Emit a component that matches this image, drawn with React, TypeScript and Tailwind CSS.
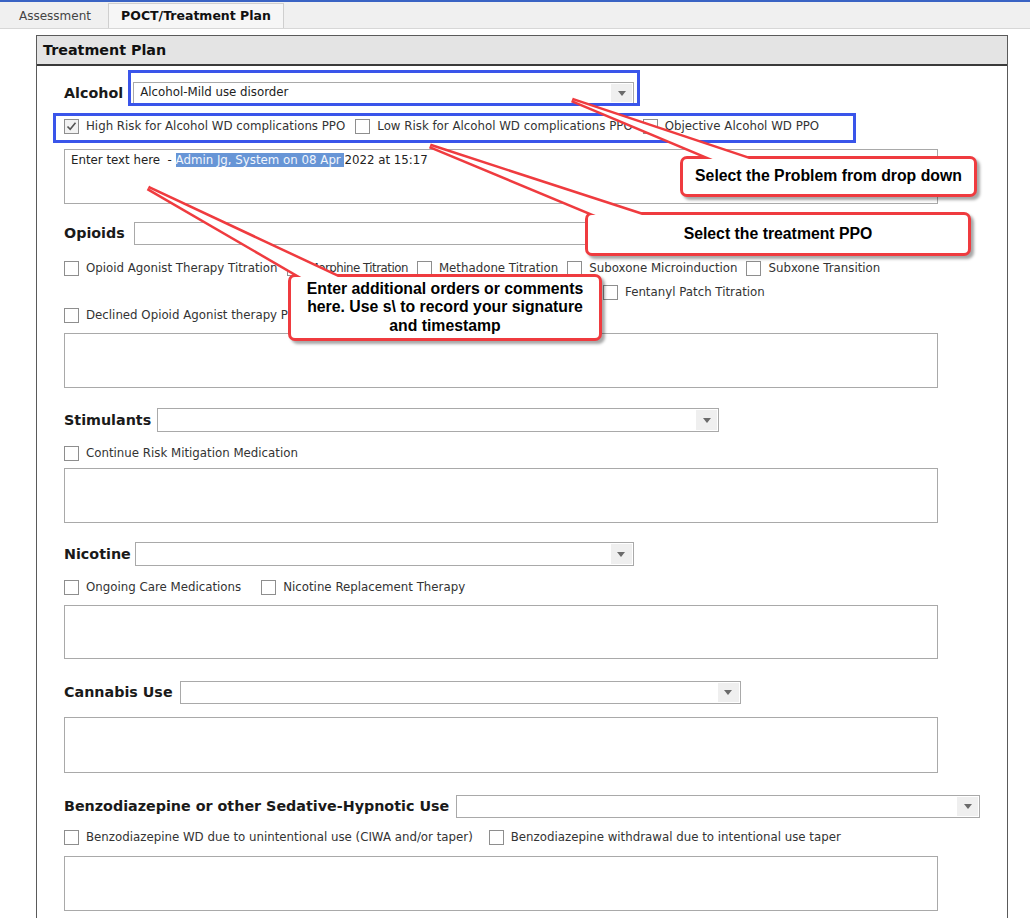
import React from "react";

type CheckProps = { label: string; checked?: boolean; textClass?: string };

function Check({ label, checked, textClass = "" }: CheckProps) {
  return (
    <div className="flex items-center gap-[7px] whitespace-nowrap">
      <span
        className={`w-[15px] h-[15px] shrink-0 border border-[#8e8e8e] flex items-center justify-center ${
          checked ? "bg-[#f2f2f2]" : "bg-white"
        }`}
      >
        {checked && (
          <svg width="11" height="11" viewBox="0 0 11 11">
            <path d="M1.5 5.5 L4.2 8.3 L9.5 1.8" fill="none" stroke="#555" strokeWidth="1.6" />
          </svg>
        )}
      </span>
      <span className={`text-[#333] ${textClass}`}>{label}</span>
    </div>
  );
}

function Select({ className, value }: { className: string; value?: string }) {
  return (
    <div className={`flex items-stretch border border-[#a9a9a9] bg-white ${className}`}>
      <div className="flex-1 flex items-center px-[6px] text-[#222]">{value}</div>
      <div className="w-[21px] m-px bg-[#efefef] flex items-center justify-center">
        <svg width="8" height="5" viewBox="0 0 8 5">
          <path d="M0 0 H8 L4 5 Z" fill="#6b6b6b" />
        </svg>
      </div>
    </div>
  );
}

function Label({ children }: { children: React.ReactNode }) {
  return (
    <span className="font-bold text-[14.3px] text-[#1a1a1a] whitespace-nowrap">
      {children}
    </span>
  );
}

function TextBox({ className = "", children }: { className?: string; children?: React.ReactNode }) {
  return (
    <div className={`w-[874px] border border-[#a9a9a9] bg-white px-[6px] pt-[5px] ${className}`}>
      {children}
    </div>
  );
}

const callouts = [
  {
    box: "left-[680px] top-[156px] w-[297px] h-[41px]",
    text: "Select the Problem from drop down",
    wedge: "572,100 715,160 752,160",
  },
  {
    box: "left-[585px] top-[212px] w-[386px] h-[44px]",
    text: "Select the treatment PPO",
    wedge: "430,146 598,216 645,216",
  },
  {
    box: "left-[288px] top-[274px] w-[314px] h-[67px]",
    text: "Enter additional orders or comments here. Use s\\ to record your signature and timestamp",
    wedge: "148,188 303,278 340,278",
  },
];

export default function App() {
  return (
    <div className="relative w-[1030px] h-[918px] overflow-hidden bg-white font-['DejaVu_Sans',sans-serif] text-[11.8px] leading-none">
      {/* window top line */}
      <div className="h-[2px] bg-[#3a63c4]" />

      {/* Tabs */}
      <div className="h-[27px] bg-[#f0f0f0] border-b border-[#d7d7d7] flex items-end pl-[8px]">
        <div className="h-[24px] px-[11px] flex items-center text-[12px] text-[#444]">Assessment</div>
        <div className="h-[25px] w-[176px] ml-[6px] border border-b-0 border-[#cfcfcf] bg-[#f6f6f6] flex items-center justify-center font-bold text-[12.5px] text-[#111]">
          POCT/Treatment Plan
        </div>
      </div>

      {/* Panel */}
      <div className="pl-[36px] pt-[6px]">
        <div className="w-[972px] h-[900px] border border-[#5a5a5a] border-b-0">
          <div className="h-[30px] bg-[#e4e4e4] border-b-2 border-[#3a3a3a] flex items-center pl-[6px]">
            <span className="font-bold text-[14.3px] text-[#111]">Treatment Plan</span>
          </div>

          <div className="pl-[27px] flex flex-col">
            {/* Alcohol */}
            <div className="mt-[16px] flex items-center gap-[10px] h-[22px]">
              <Label>Alcohol</Label>
              <Select className="w-[501px] h-[22px]" value="Alcohol-Mild use disorder" />
            </div>
            <div className="mt-[15px] flex items-center gap-[10px] h-[15px]">
              <Check checked label="High Risk for Alcohol WD complications PPO" />
              <Check label="Low Risk for Alcohol WD complications PPO" />
              <Check label="Objective Alcohol WD PPO" />
            </div>
            <TextBox className="mt-[15px] h-[55px] border-[#8fa6d2]">
              <span className="text-[#222]">Enter text here&nbsp; - </span>
              <span className="bg-[#6795d6] text-[#f2f6fc]">Admin Jg, System on 08 Apr </span>
              <span className="text-[#222]">2022 at 15:17</span>
            </TextBox>

            {/* Opioids */}
            <div className="mt-[18px] flex items-center gap-[9px] h-[23px]">
              <Label>Opioids</Label>
              <Select className="w-[586px] h-[23px]" />
            </div>
            <div className="mt-[16px] flex items-center gap-[9px] h-[15px]">
              <Check label="Opioid Agonist Therapy Titration" />
              <Check label="Morphine Titration" textClass="tracking-[-0.5px]" />
              <Check label="Methadone Titration" />
              <Check label="Suboxone Microinduction" />
              <Check label="Subxone Transition" />
            </div>
            <div className="mt-[9px] flex items-center h-[15px] pl-[539px]">
              <Check label="Fentanyl Patch Titration" />
            </div>
            <div className="mt-[8px] flex items-center h-[15px]">
              <Check label="Declined Opioid Agonist therapy PPO" />
            </div>
            <TextBox className="mt-[10px] h-[55px]" />

            {/* Stimulants */}
            <div className="mt-[20px] flex items-center gap-[6px] h-[24px]">
              <Label>Stimulants</Label>
              <Select className="w-[562px] h-[24px]" />
            </div>
            <div className="mt-[14px] flex items-center h-[15px]">
              <Check label="Continue Risk Mitigation Medication" />
            </div>
            <TextBox className="mt-[7px] h-[55px]" />

            {/* Nicotine */}
            <div className="mt-[19px] flex items-center gap-[4px] h-[24px]">
              <Label>Nicotine</Label>
              <Select className="w-[499px] h-[24px]" />
            </div>
            <div className="mt-[14px] flex items-center gap-[20px] h-[15px]">
              <Check label="Ongoing Care Medications" />
              <Check label="Nicotine Replacement Therapy" />
            </div>
            <TextBox className="mt-[10px] h-[54px]" />

            {/* Cannabis */}
            <div className="mt-[22px] flex items-center gap-[7px] h-[23px]">
              <Label>Cannabis Use</Label>
              <Select className="w-[561px] h-[23px]" />
            </div>
            <TextBox className="mt-[13px] h-[56px]" />

            {/* Benzodiazepine */}
            <div className="mt-[22px] flex items-center gap-[7px] h-[23px] w-[916px]">
              <Label>Benzodiazepine or other Sedative-Hypnotic Use</Label>
              <Select className="flex-1 h-[23px]" />
            </div>
            <div className="mt-[12px] flex items-center gap-[16px] h-[15px]">
              <Check label="Benzodiazepine WD due to unintentional use (CIWA and/or taper)" />
              <Check label="Benzodiazepine withdrawal due to intentional use taper" />
            </div>
            <TextBox className="mt-[11px] h-[55px]" />
          </div>
        </div>
      </div>

      {/* Annotation highlight boxes */}
      <div className="absolute left-[128px] top-[70px] w-[512px] h-[36px] border-[3px] border-[#3a55ea]" />
      <div className="absolute left-[53px] top-[113px] w-[803px] h-[30px] border-[3px] border-[#3a55ea]" />

      {/* Callout pointers (outline) */}
      <svg className="absolute inset-0 pointer-events-none" width="1030" height="918">
        {callouts.map((c) => (
          <polygon key={c.text} points={c.wedge} fill="#fff" stroke="#ef3b3f" strokeWidth="5" strokeLinejoin="miter" />
        ))}
      </svg>

      {/* Callout boxes */}
      {callouts.map((c) => (
        <div
          key={c.text}
          className={`absolute ${c.box} bg-white border-[3px] border-[#ef3b3f] rounded-[7px] shadow-[3px_3px_3px_rgba(0,0,0,0.35)] flex items-center justify-center px-[8px] text-center font-['Liberation_Sans',Arial,sans-serif] font-bold text-[15.8px] leading-[18.5px] text-black`}
        >
          {c.text}
        </div>
      ))}

      {/* Pointer fill over box border */}
      <svg className="absolute inset-0 pointer-events-none" width="1030" height="918">
        {callouts.map((c) => (
          <polygon key={c.text} points={c.wedge} fill="#fff" />
        ))}
      </svg>
    </div>
  );
}
